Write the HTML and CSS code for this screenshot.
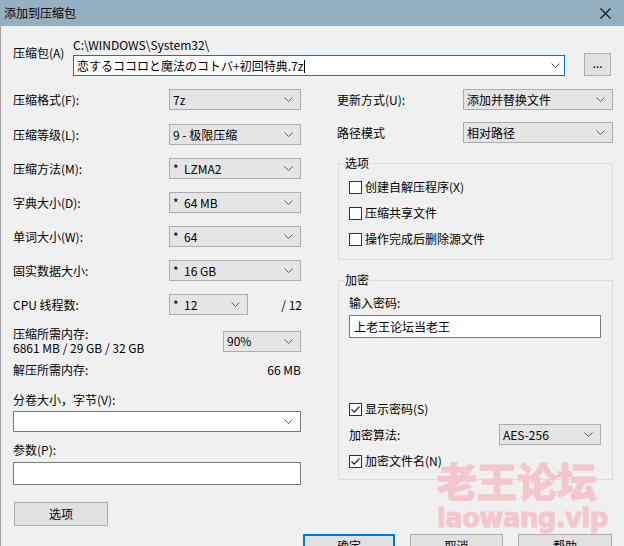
FILE: index.html
```html
<!DOCTYPE html>
<html lang="zh-CN">
<head>
<meta charset="utf-8">
<title>添加到压缩包</title>
<link rel="stylesheet" href="styles.css">
</head>
<body>
<div class="dialog">
  <div class="titlebar">
    <span class="title">添加到压缩包</span>
    <svg class="close" width="11" height="11" viewBox="0 0 11 11"><path d="M0.5 0.5 L10.5 10.5 M10.5 0.5 L0.5 10.5"/></svg>
  </div>
  <div class="content">
    <div class="archive">
      <div class="archive-label">压缩包(A)</div>
      <div class="archive-main">
        <div class="path">C:\WINDOWS\System32\</div>
        <div class="combo edit focus"><span class="val">恋するココロと魔法のコトバ+初回特典.7z<span class="caret"></span></span><svg class="chev" width="9" height="5" viewBox="0 0 9 5"><path d="M0.5 0.5 L4.5 4.5 L8.5 0.5"/></svg></div>
      </div>
      <div class="btn browse">...</div>
    </div>

    <div class="columns">
      <div class="left">
        <div class="field-row first">
          <span>压缩格式(F):</span>
          <div class="combo w132"><span class="val">7z</span><svg class="chev" width="9" height="5" viewBox="0 0 9 5"><path d="M0.5 0.5 L4.5 4.5 L8.5 0.5"/></svg></div>
        </div>
        <div class="field-row">
          <span>压缩等级(L):</span>
          <div class="combo w132"><span class="val">9 - 极限压缩</span><svg class="chev" width="9" height="5" viewBox="0 0 9 5"><path d="M0.5 0.5 L4.5 4.5 L8.5 0.5"/></svg></div>
        </div>
        <div class="field-row">
          <span>压缩方法(M):</span>
          <div class="combo w132"><span class="val">*  LZMA2</span><svg class="chev" width="9" height="5" viewBox="0 0 9 5"><path d="M0.5 0.5 L4.5 4.5 L8.5 0.5"/></svg></div>
        </div>
        <div class="field-row">
          <span>字典大小(D):</span>
          <div class="combo w132"><span class="val">*  64 MB</span><svg class="chev" width="9" height="5" viewBox="0 0 9 5"><path d="M0.5 0.5 L4.5 4.5 L8.5 0.5"/></svg></div>
        </div>
        <div class="field-row">
          <span>单词大小(W):</span>
          <div class="combo w132"><span class="val">*  64</span><svg class="chev" width="9" height="5" viewBox="0 0 9 5"><path d="M0.5 0.5 L4.5 4.5 L8.5 0.5"/></svg></div>
        </div>
        <div class="field-row">
          <span>固实数据大小:</span>
          <div class="combo w132"><span class="val">*  16 GB</span><svg class="chev" width="9" height="5" viewBox="0 0 9 5"><path d="M0.5 0.5 L4.5 4.5 L8.5 0.5"/></svg></div>
        </div>
        <div class="cpu-row">
          <span>CPU 线程数:</span>
          <div class="combo"><span class="val">*  12</span><svg class="chev" width="9" height="5" viewBox="0 0 9 5"><path d="M0.5 0.5 L4.5 4.5 L8.5 0.5"/></svg></div>
          <span class="right-text">/ 12</span>
        </div>
        <div class="mem-row">
          <div class="mem-text">
            <div>压缩所需内存:</div>
            <div>6861 MB / 29 GB / 32 GB</div>
          </div>
          <div class="combo w78"><span class="val">90%</span><svg class="chev" width="9" height="5" viewBox="0 0 9 5"><path d="M0.5 0.5 L4.5 4.5 L8.5 0.5"/></svg></div>
        </div>
        <div class="decomp-row">
          <span>解压所需内存:</span>
          <span>66 MB</span>
        </div>
        <div class="vol-label">分卷大小，字节(V):</div>
        <div class="combo edit vol"><span class="val"></span><svg class="chev" width="9" height="5" viewBox="0 0 9 5"><path d="M0.5 0.5 L4.5 4.5 L8.5 0.5"/></svg></div>
        <div class="param-label">参数(P):</div>
        <div class="textbox param"></div>
        <div class="btn options-btn">选项</div>
      </div>

      <div class="right">
        <div class="field-row r1">
          <span>更新方式(U):</span>
          <div class="combo w150"><span class="val">添加并替换文件</span><svg class="chev" width="9" height="5" viewBox="0 0 9 5"><path d="M0.5 0.5 L4.5 4.5 L8.5 0.5"/></svg></div>
        </div>
        <div class="field-row r2">
          <span>路径模式</span>
          <div class="combo w150"><span class="val">相对路径</span><svg class="chev" width="9" height="5" viewBox="0 0 9 5"><path d="M0.5 0.5 L4.5 4.5 L8.5 0.5"/></svg></div>
        </div>

        <fieldset class="group opts">
          <legend>选项</legend>
          <div class="check-row"><span class="cb"></span><span>创建自解压程序(X)</span></div>
          <div class="check-row"><span class="cb"></span><span>压缩共享文件</span></div>
          <div class="check-row"><span class="cb"></span><span>操作完成后删除源文件</span></div>
        </fieldset>

        <fieldset class="group enc">
          <legend>加密</legend>
          <div class="pw-label">输入密码:</div>
          <div class="textbox pw">上老王论坛当老王</div>
          <div class="check-row show-pw"><span class="cb checked"><svg width="11" height="11" viewBox="0 0 11 11"><path d="M1.5 5.5 L4.2 8.2 L9.5 2.5"/></svg></span><span>显示密码(S)</span></div>
          <div class="field-row algo">
            <span>加密算法:</span>
            <div class="combo w102"><span class="val">AES-256</span><svg class="chev" width="9" height="5" viewBox="0 0 9 5"><path d="M0.5 0.5 L4.5 4.5 L8.5 0.5"/></svg></div>
          </div>
          <div class="check-row enc-names"><span class="cb checked"><svg width="11" height="11" viewBox="0 0 11 11"><path d="M1.5 5.5 L4.2 8.2 L9.5 2.5"/></svg></span><span>加密文件名(N)</span></div>
        </fieldset>
      </div>
    </div>

    <div class="footer">
      <div class="btn default w92">确定</div>
      <div class="btn w93">取消</div>
      <div class="btn w94">帮助</div>
    </div>
  </div>

  <div class="watermark">
    <div class="wm-cn">老王论坛</div>
    <div class="wm-en">laowang.vip</div>
  </div>
</div>
</body>
</html>
```

FILE: styles.css
```css
html, body {
  margin: 0;
  padding: 0;
}

body {
  width: 624px;
  height: 546px;
  overflow: hidden;
  background: #f0f0f0;
  font-family: "Noto Sans CJK SC", "Noto Sans", sans-serif;
  font-size: 12px;
  line-height: 16px;
  color: #000;
}

.dialog {
  position: relative;
  width: 624px;
  height: 546px;
  overflow: hidden;
}

.titlebar {
  height: 26px;
  background: #94afc0;
  display: flex;
  align-items: center;
  justify-content: space-between;
  padding: 0 13px 0 4px;
  box-sizing: border-box;
}

.title {
  line-height: 14px;
}

.close path {
  stroke: #111;
  stroke-width: 1.1;
  fill: none;
}

.content {
  border-left: 1px solid #a3a3a3;
  padding: 0 11px 0 12px;
  height: 520px;
  box-sizing: border-box;
}

/* archive row */
.archive {
  display: flex;
}

.archive-label {
  width: 60px;
  padding-top: 20px;
  line-height: 14px;
}

.archive-main {
  width: 492px;
}

.path {
  margin-top: 12px;
  line-height: 14px;
}

.browse {
  width: 27px;
  height: 23px;
  margin: 27px 0 0 19px;
  line-height: 18px;
}

/* combos */
.combo {
  display: flex;
  align-items: center;
  justify-content: space-between;
  height: 21px;
  box-sizing: border-box;
  border: 1px solid #adadad;
  background: #e5e5e5;
  padding: 0 7px 0 3px;
  white-space: pre;
  line-height: 16px;
}

.combo.edit {
  background: #fff;
  border-color: #7a7a7a;
}

.combo.focus {
  margin-top: 3px;
  border-color: #0078d7;
  padding-right: 4px;
}

.caret {
  display: inline-block;
  width: 1px;
  height: 13px;
  background: #000;
  margin-left: 1px;
  vertical-align: -2px;
}

.chev path {
  stroke: #606060;
  stroke-width: 1;
  fill: none;
}

.w132 { width: 132px; }
.w78 { width: 78px; }
.w150 { width: 150px; }
.w102 { width: 102px; }

/* columns */
.columns {
  display: flex;
  margin-top: 13px;
}

.left {
  width: 288px;
}

.right {
  width: 276px;
  margin-left: 36px;
}

.field-row {
  display: flex;
  align-items: center;
  justify-content: space-between;
  height: 21px;
  margin-bottom: 13px;
}

.field-row.first {
  margin-bottom: 14px;
}

.cpu-row {
  display: grid;
  grid-template-columns: 156px 79px 1fr;
  align-items: center;
  height: 21px;
}

.right-text {
  text-align: right;
  margin-right: -1px;
}

.mem-row {
  display: flex;
  align-items: center;
  justify-content: space-between;
  margin-top: 12px;
  height: 28px;
}

.mem-text {
  line-height: 14px;
}

.decomp-row {
  display: flex;
  justify-content: space-between;
  margin-top: 8px;
  line-height: 14px;
}

.vol-label {
  margin-top: 16px;
  line-height: 14px;
}

.combo.vol {
  margin-top: 4px;
}

.param-label {
  margin-top: 11px;
  line-height: 14px;
}

.textbox {
  box-sizing: border-box;
  height: 23px;
  border: 1px solid #7a7a7a;
  background: #fff;
}

.param {
  margin-top: 5px;
}

.btn {
  box-sizing: border-box;
  border: 1px solid #adadad;
  background: #e1e1e1;
  text-align: center;
}

.options-btn {
  width: 94px;
  height: 24px;
  margin: 17px 0 0 1px;
  line-height: 22px;
}

/* right column */
.field-row.r1 {
  margin-bottom: 12px;
}

.field-row.r2 {
  margin-bottom: 13px;
}

.group {
  margin: 0 0 0 1px;
  padding: 0 11px 12px 10px;
  border: 1px solid #dcdcdc;
  min-width: 0;
  width: 275px;
  box-sizing: border-box;
}

.group legend {
  padding: 0 1px;
  margin-left: -5px;
  line-height: 14px;
}

.opts .check-row {
  margin-top: 10px;
}

.opts .check-row:first-of-type {
  margin-top: 9px;
}

.enc {
  margin-top: 13px;
  padding-bottom: 10px;
}

.check-row {
  display: flex;
  align-items: center;
  height: 16px;
  gap: 3px;
}

.cb {
  width: 13px;
  height: 13px;
  box-sizing: border-box;
  border: 1px solid #333;
  background: #fff;
  display: flex;
  align-items: center;
  justify-content: center;
}

.cb svg path {
  stroke: #222;
  stroke-width: 1.2;
  fill: none;
}

.pw-label {
  margin-top: 9px;
  line-height: 14px;
}

.textbox.pw {
  margin-top: 5px;
  padding-left: 4px;
  line-height: 21px;
}

.show-pw {
  margin-top: 63px;
}

.field-row.algo {
  margin: 7px 0 0 0;
}

.enc-names {
  margin-top: 8px;
}

/* footer */
.footer {
  display: flex;
  justify-content: flex-end;
  gap: 15px;
  margin-top: 8px;
  padding-right: 1px;
}

.footer .btn {
  height: 23px;
  line-height: 21px;
}

.btn.default {
  border: 2px solid #0078d7;
  line-height: 19px;
}

.w92 { width: 92px; }
.w93 { width: 93px; }
.w94 { width: 94px; }

/* watermark overlay */
.watermark {
  position: absolute;
  left: 437px;
  top: 452px;
  color: #f5c6cd;
  -webkit-text-stroke: 1.6px #f5c6cd;
  font-family: "Noto Sans CJK SC", sans-serif;
  font-weight: 700;
  pointer-events: none;
}

.wm-cn {
  font-size: 40px;
  line-height: 56px;
}

.wm-en {
  font-family: "DejaVu Sans", sans-serif;
  font-size: 26px;
  line-height: 28px;
  margin-top: -4px;
  letter-spacing: -0.6px;
  -webkit-text-stroke: 1px #f5c6cd;
}
```
